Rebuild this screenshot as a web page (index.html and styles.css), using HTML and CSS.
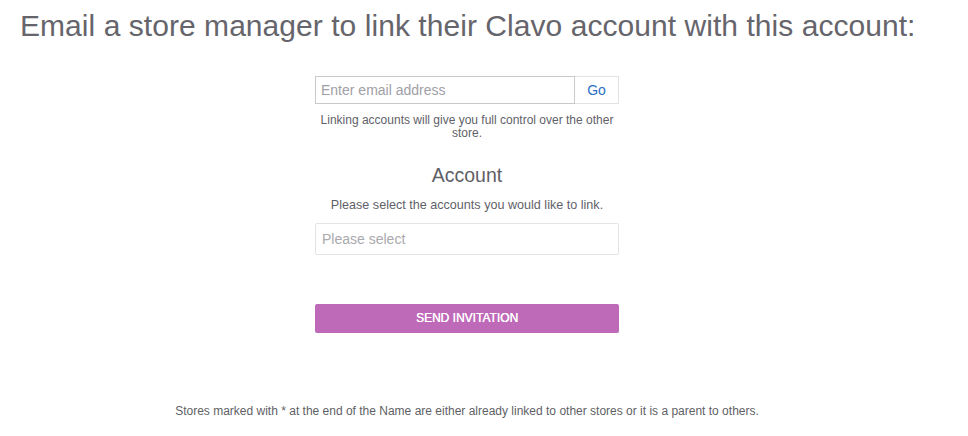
FILE: index.html
```html
<!DOCTYPE html>
<html>
<head>
<meta charset="utf-8">
<link rel="stylesheet" href="styles.css">
</head>
<body>
<div class="page">
  <h1 class="title">Email a store manager to link their Clavo account with this account:</h1>
  <div class="form">
    <div class="email-row">
      <div class="email-input">Enter email address</div>
      <div class="go-btn">Go</div>
    </div>
    <p class="help">Linking accounts will give you full control over the other store.</p>
    <h2 class="section">Account</h2>
    <p class="desc">Please select the accounts you would like to link.</p>
    <div class="select">Please select</div>
    <div class="send">SEND INVITATION</div>
  </div>
  <p class="footer">Stores marked with * at the end of the Name are either already linked to other stores or it is a parent to others.</p>
</div>
</body>
</html>
```
FILE: styles.css
```css
html, body {
  margin: 0;
  padding: 0;
  background: #ffffff;
}
body {
  font-family: "Liberation Sans", Arial, sans-serif;
  color: #5f5f66;
}
.page {
  width: 934px;
  display: flex;
  flex-direction: column;
  align-items: center;
}
.title {
  align-self: flex-start;
  margin: 8px 0 0 20px;
  font-size: 30px;
  font-weight: normal;
  line-height: 36px;
  color: #65656b;
  letter-spacing: 0.05px;
}
.form {
  width: 304px;
  margin-top: 32px;
  display: flex;
  flex-direction: column;
  align-items: stretch;
}
.email-row {
  display: flex;
  height: 28px;
}
.email-input {
  flex: 1;
  box-sizing: border-box;
  border: 1px solid #c9c9cc;
  font-size: 14px;
  color: #a0a0a6;
  padding: 0 5px;
  line-height: 26px;
}
.go-btn {
  width: 44px;
  box-sizing: border-box;
  border: 1px solid #e2e2e4;
  border-left: none;
  text-align: center;
  color: #2a6fc4;
  font-size: 14px;
  line-height: 26px;
}
.help {
  margin: 10px 0 0;
  font-size: 12px;
  line-height: 13px;
  text-align: center;
  color: #5f5f69;
  padding: 0 2px;
}
.section {
  margin: 24px 0 0;
  font-size: 19.5px;
  font-weight: normal;
  line-height: 22px;
  text-align: center;
  color: #5f5f66;
}
.desc {
  margin: 13px 0 0;
  font-size: 12.6px;
  line-height: 13px;
  text-align: center;
  color: #5f5f69;
}
.select {
  margin-top: 11px;
  height: 32px;
  box-sizing: border-box;
  border: 1px solid #e4e4e8;
  border-radius: 2px;
  font-size: 14px;
  color: #a9a9ae;
  padding: 0 6px;
  line-height: 30px;
}
.send {
  margin-top: 49px;
  height: 29px;
  background: #bf69b9;
  border-radius: 2px;
  color: #ffffff;
  font-size: 12px;
  line-height: 29px;
  text-align: center;
  text-shadow: 0.3px 0 0 #ffffff;
}
.footer {
  margin: 72px 0 0;
  font-size: 12px;
  line-height: 13px;
  color: #5f5f66;
  text-align: center;
}
```
